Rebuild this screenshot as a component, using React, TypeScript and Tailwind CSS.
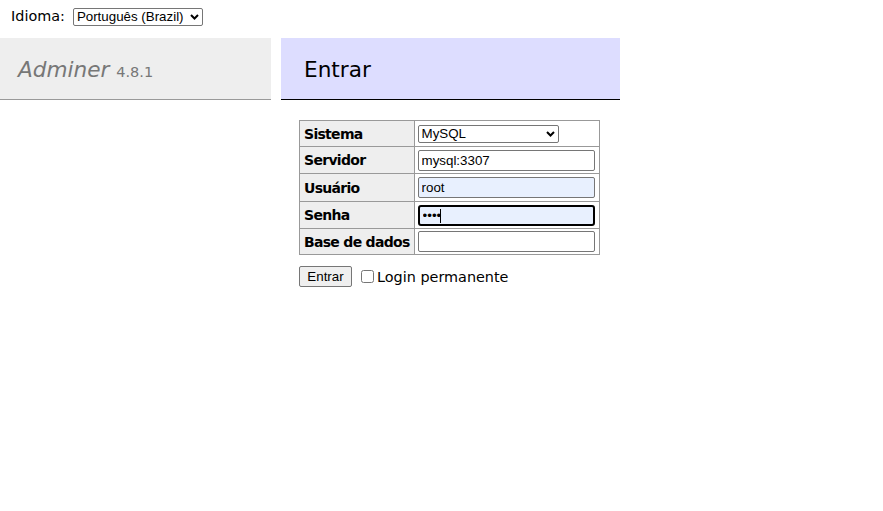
import type { ReactNode } from 'react'

const Chevron = () => (
  <svg width="9" height="6" viewBox="0 0 9 6" className="pointer-events-none absolute top-1/2 -translate-y-1/2 right-0">
    <path d="M1 1l3.5 3.5L8 1" stroke="#000" strokeWidth="2" fill="none" />
  </svg>
)

const FakeSelect = ({ value, className }: { value: string; className: string }) => (
  <div className={`relative inline-flex ${className}`}>
    <select
      defaultValue={value}
      className="h-full w-full appearance-none rounded-[2px] border border-[#767676] bg-white pl-[3px] text-[13.33px] leading-none text-black font-['Liberation_Sans',Arial,sans-serif] outline-none"
    >
      <option>{value}</option>
    </select>
    <span className="absolute right-[4px] top-0 h-full w-[9px]">
      <Chevron />
    </span>
  </div>
)

const inputBase =
  "block h-[21px] w-[177px] px-[3px] text-[13.33px] text-black font-['Liberation_Sans',Arial,sans-serif] outline-none"
const inputCls = `${inputBase} rounded-[2px] border border-[#767676]`

const Row = ({ label, h, children }: { label: string; h: string; children: ReactNode }) => (
  <tr>
    <th
      className={`border border-[#999] bg-[#eee] px-[4px] py-0 text-left align-middle text-[14px] font-bold tracking-[-0.7px] ${h}`}
    >
      {label}
    </th>
    <td className="border border-[#999] py-0 pl-[3px] pr-[4px] align-middle">{children}</td>
  </tr>
)

export default function App() {
  return (
    <div className="min-h-[511px] w-[883px] bg-white text-[14.4px] leading-[18px] text-black font-['DejaVu_Sans',Verdana,sans-serif]">
      {/* language */}
      <div className="flex h-[38px] items-start gap-[8px] pl-[11px] pt-[8px]">
        <span className="leading-[17px]">Idioma:</span>
        <FakeSelect value="Português (Brazil)" className="h-[18px] w-[130px]" />
      </div>

      <div className="flex items-start gap-[10px]">
        {/* menu */}
        <div className="w-[271px]">
          <h1 className="h-[62px] border-b border-[#999] bg-[#eee] pl-[18px] pt-[18px] text-[21.6px] leading-[27px] text-[#777]">
            <span className="italic">Adminer</span> <span className="text-[14.5px]">4.8.1</span>
          </h1>
        </div>

        {/* content */}
        <div className="w-[339px]">
          <h2 className="mb-[20px] h-[62px] border-b border-black bg-[#ddf] pl-[23px] pt-[18px] text-[21.6px] leading-[27px] text-black">
            Entrar
          </h2>

          <form className="pl-[18px]" onSubmit={(e) => e.preventDefault()}>
            <table className="border-collapse">
              <tbody>
                <Row label="Sistema" h="h-[26px]">
                  <FakeSelect value="MySQL" className="h-[18px] w-[141px] align-middle" />
                </Row>
                <Row label="Servidor" h="h-[27px]">
                  <input className={inputCls} defaultValue="mysql:3307" />
                </Row>
                <Row label="Usuário" h="h-[28px]">
                  <input className={`${inputCls} bg-[#e8f0fe]`} defaultValue="root" />
                </Row>
                <Row label="Senha" h="h-[27px]">
                  <div className="relative">
                    <input
                      type="password"
                      className={`${inputBase} rounded-[3px] border-2 border-black bg-[#e8f0fe] text-[10px]`}
                      defaultValue="1234"
                    />
                    <span className="absolute left-[22px] top-[4px] h-[14px] w-px bg-black" />
                  </div>
                </Row>
                <Row label="Base de dados" h="h-[26px]">
                  <input className={inputCls} defaultValue="" />
                </Row>
              </tbody>
            </table>

            <div className="mt-[11px] flex items-center">
              <button
                type="submit"
                className="h-[21px] w-[53px] rounded-[2px] border border-[#767676] bg-[#efefef] text-[13.33px] text-black font-['Liberation_Sans',Arial,sans-serif]"
              >
                Entrar
              </button>
              <label className="ml-[9px] flex items-center">
                <input type="checkbox" className="m-0 mr-[3px] h-[13px] w-[13px]" />
                Login permanente
              </label>
            </div>
          </form>
        </div>
      </div>
    </div>
  )
}
